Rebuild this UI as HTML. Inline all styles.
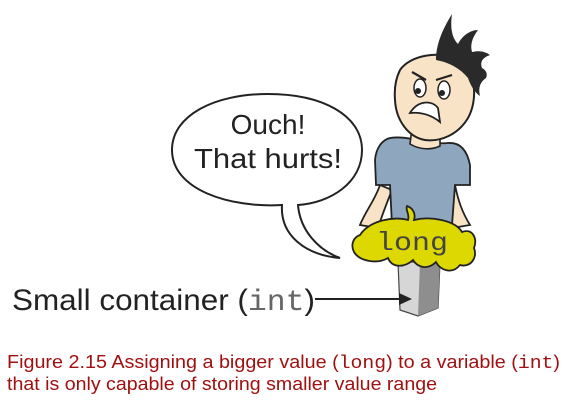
<!DOCTYPE html>
<html><head><meta charset="utf-8"><style>
html,body{margin:0;padding:0;background:#fff;width:567px;height:408px;overflow:hidden}
svg{display:block}
</style></head><body>
<svg width="567" height="408" viewBox="0 0 567 408" xmlns="http://www.w3.org/2000/svg">
<!-- speech bubble -->
<path d="M282 205 C 230 208 172 190 172 150 C 172 115 215 94 268 94 C 322 94 362 115 362 150 C 362 183 330 203 298 205 C 300 230 318 250 340 258 C 305 255 280 235 282 205 Z" fill="#fff" stroke="#222" stroke-width="2"/>
<text x="268" y="134" font-family="Liberation Sans, sans-serif" font-size="28" fill="#222" text-anchor="middle">Ouch!</text>
<text x="268" y="168" font-family="Liberation Sans, sans-serif" font-size="28" fill="#222" text-anchor="middle" textLength="148" lengthAdjust="spacingAndGlyphs">That hurts!</text>

<!-- arms -->
<path d="M380 185 C 375 200 365 212 360 225 L 378 228 C 382 215 388 200 392 190 Z" fill="#f9e3c6" stroke="#222" stroke-width="1.8"/>
<path d="M455 185 C 458 200 462 212 470 225 L 452 228 C 450 215 448 200 446 190 Z" fill="#f9e3c6" stroke="#222" stroke-width="1.8"/>
<!-- shirt -->
<path d="M390 138 C 410 135 425 145 448 143 C 460 142 467 150 470 165 L 470 185 L 455 185 L 452 225 L 392 225 L 390 185 L 376 185 L 375 160 C 376 148 382 140 390 138 Z" fill="#8fa6bf" stroke="#222" stroke-width="1.8"/>
<!-- neck -->
<path d="M412 128 L 410 144 C 420 150 432 150 440 146 L 440 132 Z" fill="#f9e3c6" stroke="#222" stroke-width="1.6"/>
<!-- head -->
<path d="M400 70 C 410 55 440 50 460 60 C 476 72 478 100 468 118 C 458 135 440 142 425 140 C 408 137 396 120 395 100 C 394 88 396 78 400 70 Z" fill="#f9e3c6" stroke="#222" stroke-width="2"/>
<!-- hair -->
<path d="M436 60 C 436 45 442 30 452 14 C 450 28 452 38 458 44 C 462 36 470 30 478 30 C 472 38 470 45 472 52 C 480 50 486 52 490 55 C 482 58 480 62 482 68 C 486 70 488 74 486 78 C 480 82 478 88 480 96 C 474 92 470 84 468 78 C 460 68 448 62 436 60 Z" fill="#2a2a2a"/>
<!-- eyes -->
<ellipse cx="420" cy="88" rx="6" ry="9" fill="#fff" stroke="#222" stroke-width="1.5"/>
<ellipse cx="444" cy="90" rx="6" ry="9" fill="#fff" stroke="#222" stroke-width="1.5"/>
<circle cx="418" cy="91" r="3" fill="#222"/>
<circle cx="442" cy="93" r="3" fill="#222"/>
<path d="M412 72 L 426 80 M 436 80 L 452 75" stroke="#222" stroke-width="2.2" fill="none"/>
<!-- mouth -->
<path d="M410 113 C 418 100 432 100 438 108 L 440 122 C 430 114 420 112 410 113 Z" fill="#fff" stroke="#222" stroke-width="1.8"/>

<!-- pillar -->
<path d="M398 262 L 440 262 L 438 308 L 418 316 L 400 310 Z" fill="#d6d6d6" stroke="#444" stroke-width="1.2"/>
<path d="M420 262 L 440 262 L 438 308 L 418 316 Z" fill="#8e8e8e"/>
<!-- blob -->
<path d="M360 235 C 370 220 395 216 408 220 C 410 214 405 210 407 206 C 413 208 416 214 414 220 C 430 216 455 220 462 232 C 472 228 478 238 474 248 C 478 258 470 268 460 265 C 452 275 440 270 436 262 C 428 270 418 268 413 260 C 404 268 392 268 388 258 C 378 264 360 262 354 252 C 350 244 354 237 360 235 Z" fill="#dcd800" stroke="#222" stroke-width="1.8"/>
<text x="412" y="250" font-family="Liberation Mono, monospace" font-size="26" fill="#444" text-anchor="middle" textLength="72" lengthAdjust="spacingAndGlyphs">long</text>

<!-- label + arrow -->
<text x="12" y="310" font-family="Liberation Sans, sans-serif" font-size="30" fill="#222" textLength="303" lengthAdjust="spacingAndGlyphs">Small container (<tspan font-family="Liberation Mono, monospace" fill="#666">int</tspan>)</text>
<line x1="315" y1="299" x2="402" y2="299" stroke="#222" stroke-width="2"/>
<path d="M399 293 L 412 299 L 399 305 Z" fill="#222"/>

<!-- caption -->
<text x="7" y="368" font-family="Liberation Sans, sans-serif" font-size="18" fill="#a01010" textLength="553" lengthAdjust="spacingAndGlyphs">Figure 2.15 Assigning a bigger value (<tspan font-family="Liberation Mono, monospace">long</tspan>) to a variable (<tspan font-family="Liberation Mono, monospace">int</tspan>)</text>
<text x="7" y="390" font-family="Liberation Sans, sans-serif" font-size="18" fill="#a01010" textLength="430" lengthAdjust="spacingAndGlyphs">that is only capable of storing smaller value range</text>
</svg>
</body></html>
